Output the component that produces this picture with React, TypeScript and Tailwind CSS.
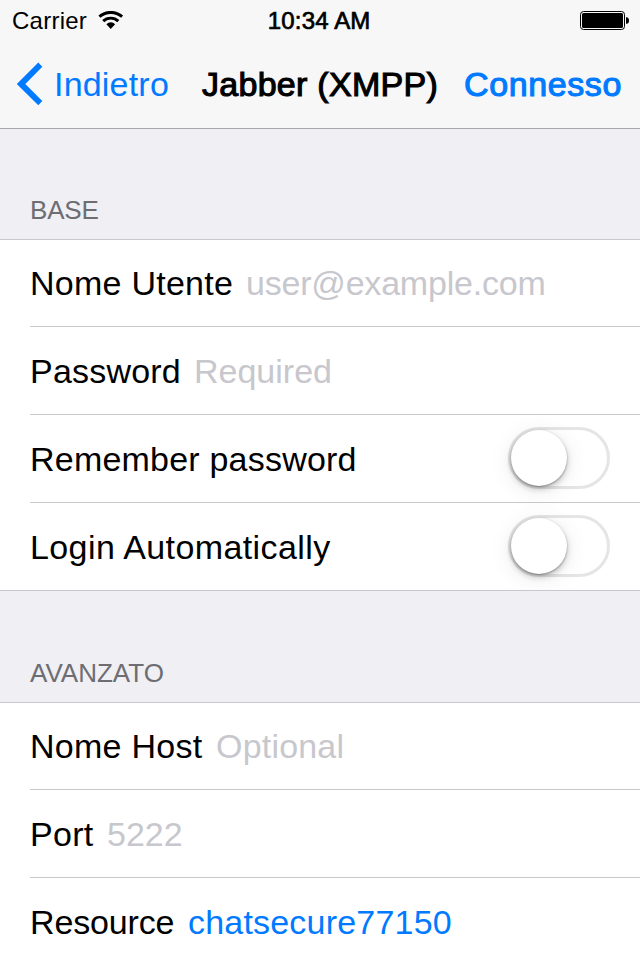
import type { ReactNode } from "react";

function StatusBar() {
  return (
    <div className="grid h-10 grid-cols-3 pt-[7px] text-[24px] leading-[27px]">
      <div className="flex pl-3">
        <span className="w-[86px] whitespace-nowrap tracking-[0.25px]">Carrier</span>
        <svg className="mt-[4px] h-[18px] w-[26px]" viewBox="0 0 26 18" fill="none">
          <path d="M1.4 5.6C8 0 17.5 0 24.1 5.6" stroke="#000" strokeWidth="3" />
          <path d="M5.2 10.1C9.2 6.1 16.3 6.1 20.3 10.1" stroke="#000" strokeWidth="2.9" />
          <path d="M8.4 13.3C10.8 10.6 14.7 10.6 17.1 13.3L12.75 17.9Z" fill="#000" />
        </svg>
      </div>
      <div className="whitespace-nowrap pl-[54.5px] tracking-[0.15px] [-webkit-text-stroke:0.7px_#000]">
        10:34 AM
      </div>
      <div className="flex justify-end pr-[11px]">
        <svg className="mt-[4px] h-[19px] w-[49px]" viewBox="0 0 49 19">
          <rect x=".5" y=".5" width="44" height="18" rx="3" fill="none" stroke="#000" />
          <rect x="2" y="2" width="41" height="15" rx="1.5" fill="#000" />
          <path d="M46 6.2h.6C48.2 6.2 49 7.5 49 9.5s-.8 3.3-2.4 3.3H46z" fill="#000" />
        </svg>
      </div>
    </div>
  );
}

function NavBar() {
  return (
    <div className="flex h-[88px] pt-[25px] text-[34px] leading-[38px] whitespace-nowrap">
      <div className="flex w-[202px] pl-4 text-[#007aff]">
        <svg className="-mt-[3px] mr-[11px] h-[44px] w-[27px]" viewBox="0 0 27 44">
          <path d="M.8 21.9L22.3 .6L26.3 4.8L9.3 21.9L26.3 39L22.3 43.2Z" fill="#007aff" />
        </svg>
        <span className="tracking-[0.2px]">Indietro</span>
      </div>
      <div className="w-[262px] tracking-[0.28px] [-webkit-text-stroke:1.1px_#000]">
        Jabber (XMPP)
      </div>
      <div className="tracking-[0.6px] text-[#007aff] [-webkit-text-stroke:1.1px_#007aff]">
        Connesso
      </div>
    </div>
  );
}

function Switch() {
  return (
    <div className="-mb-[11px] ml-auto mr-[30px] h-[62px] w-[102px] rounded-full border-[3px] border-[#e5e5e5]">
      <div className="size-14 rounded-full bg-white shadow-[0_4px_24px_rgba(0,0,0,0.09),0_3px_6px_rgba(0,0,0,0.22),0_1px_2px_rgba(0,0,0,0.32)]" />
    </div>
  );
}

type RowProps = { size?: string; children: ReactNode };

function Row({ size = "h-[88px] border-b pb-6", children }: RowProps) {
  return (
    <div
      className={`flex items-end border-[#c8c7cc] text-[34px] leading-[38px] whitespace-nowrap ${size}`}
    >
      {children}
    </div>
  );
}

function SectionTitle({ className, children }: { className: string; children: ReactNode }) {
  return (
    <h2
      className={`flex items-end pb-[14px] pl-[30px] text-[26px] leading-[30px] text-[#6d6d72] ${className}`}
    >
      {children}
    </h2>
  );
}

export default function App() {
  return (
    <div className="h-[960px] w-[640px] overflow-hidden bg-[#efeff4] font-['Liberation_Sans',Arial,sans-serif] text-black">
      <header className="border-b border-[#a7a7aa] bg-[#f7f7f7]">
        <StatusBar />
        <NavBar />
      </header>

      <SectionTitle className="h-[110px] tracking-[-0.2px]">BASE</SectionTitle>
      <section className="h-[352px] overflow-hidden border-y border-[#c8c7cc] bg-white pl-[30px]">
        <Row size="h-[87px] border-b pb-6">
          <span className="w-[216px] tracking-[0.25px]">Nome Utente</span>
          <span className="tracking-[-0.2px] text-[#c7c7cd]">user@example.com</span>
        </Row>
        <Row>
          <span className="w-[164px] tracking-[0.2px]">Password</span>
          <span className="text-[#c7c7cd]">Required</span>
        </Row>
        <Row>
          <span className="tracking-[0.21px]">Remember password</span>
          <Switch />
        </Row>
        <Row size="h-[87px] pb-6">
          <span className="tracking-[0.4px]">Login Automatically</span>
          <Switch />
        </Row>
      </section>

      <SectionTitle className="h-[111px]">AVANZATO</SectionTitle>
      <section className="border-t border-[#c8c7cc] bg-white pl-[30px]">
        <Row size="h-[87px] border-b pb-6">
          <span className="w-[186px] tracking-[0.27px]">Nome Host</span>
          <span className="tracking-[0.2px] text-[#c7c7cd]">Optional</span>
        </Row>
        <Row>
          <span className="w-[77px] tracking-[0.3px]">Port</span>
          <span className="text-[#c7c7cd]">5222</span>
        </Row>
        <Row size="h-[88px] pb-[25px]">
          <span className="w-[158px] tracking-[-0.15px]">Resource</span>
          <span className="tracking-[0.2px] text-[#007aff]">chatsecure77150</span>
        </Row>
      </section>
    </div>
  );
}
